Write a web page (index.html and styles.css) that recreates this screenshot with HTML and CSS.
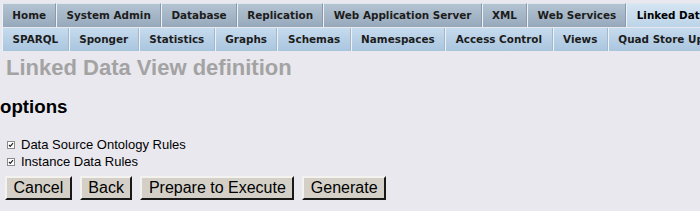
FILE: index.html
```html
<!doctype html>
<html>
    <head>
        <meta charset="utf-8">
        <title>Linked Data View definition</title>
        <link rel="stylesheet" href="styles.css">
    </head>
    <body>
        <div class="navbar">
            <ul class="tabs tabs-main">
                <li>Home</li>
                <li>System Admin</li>
                <li>Database</li>
                <li>Replication</li>
                <li>Web Application Server</li>
                <li>XML</li>
                <li>Web Services</li>
                <li class="active">Linked Data</li>
            </ul>
            <ul class="tabs tabs-sub">
                <li>SPARQL</li>
                <li>Sponger</li>
                <li>Statistics</li>
                <li>Graphs</li>
                <li>Schemas</li>
                <li>Namespaces</li>
                <li>Access Control</li>
                <li>Views</li>
                <li>Quad Store Upload</li>
            </ul>
        </div>

        <div class="page-title">Linked Data View definition</div>

        <form class="view-form">
            <h3>options</h3>

            <label class="check-row"><input type="checkbox" checked> Data Source Ontology Rules</label>
            <label class="check-row"><input type="checkbox" checked> Instance Data Rules</label>

            <div class="form-actions">
                <button type="button" class="btn">Cancel</button>
                <button type="button" class="btn">Back</button>
                <button type="button" class="btn">Prepare to Execute</button>
                <button type="button" class="btn">Generate</button>
            </div>
        </form>
    </body>
</html>
```

FILE: styles.css
```css
html,
body {
    margin: 0;
    background: #e9e8ee;
    font-family: "Liberation Sans", Arial, sans-serif;
    overflow: hidden;
}

.navbar {
    padding-top: 3px;
}

.tabs {
    display: flex;
    margin: 0;
    padding: 0 0 0 2px;
    list-style: none;
    white-space: nowrap;
}

.tabs li {
    flex: none;
    height: 23px;
    line-height: 23px;
    padding: 0 9.3px;
    font-family: "DejaVu Sans", Verdana, sans-serif;
    font-size: 10.4px;
    font-weight: bold;
    color: #1c1c1c;
    border-left: 1px solid #eef2f6;
    border-right: 1px solid #8a9aaa;
}

.tabs-main li {
    background: linear-gradient(#b3c3d2, #96a9bb);
    border-top: 1px solid #dfe6ee;
}

.tabs-main li.active {
    background: linear-gradient(#d4e4f2, #bcd4e8);
    color: #000;
}

.tabs-sub li {
    margin-top: 1px;
    padding: 0 9.5px;
    background: linear-gradient(#c6dbee, #a9c5de);
    border-right-color: #a4b8ca;
}

.page-title {
    margin: 4px 0 0 6px;
    font-size: 22px;
    font-weight: bold;
    color: #a3a3a3;
}

.view-form h3 {
    margin: 15px 0 18px 0;
    font-size: 18.7px;
}

.check-row {
    display: flex;
    align-items: center;
    font-size: 13px;
    line-height: 17px;
    color: #000;
}

.check-row input {
    appearance: none;
    -webkit-appearance: none;
    width: 8px;
    height: 8px;
    margin: 0 6px 0 7px;
    border: 1px solid #8a8a8a;
    background: #fff url("data:image/svg+xml,%3Csvg xmlns='http://www.w3.org/2000/svg' viewBox='0 0 6 6'%3E%3Cpath d='M1 3l1.3 1.4L5 1.2' fill='none' stroke='%23222' stroke-width='1.2'/%3E%3C/svg%3E") center / 6px 6px no-repeat;
}

.form-actions {
    display: flex;
    gap: 8px;
    padding: 6px 0 0 5px;
}

.btn {
    height: 24px;
    padding: 0 6.5px;
    font-family: "Liberation Sans", Arial, sans-serif;
    font-size: 16px;
    color: #000;
    background: #d4d0c8;
    border: 2px outset #f4f2ee;
    border-right-color: #6e6c68;
    border-bottom-color: #6e6c68;
}
```
